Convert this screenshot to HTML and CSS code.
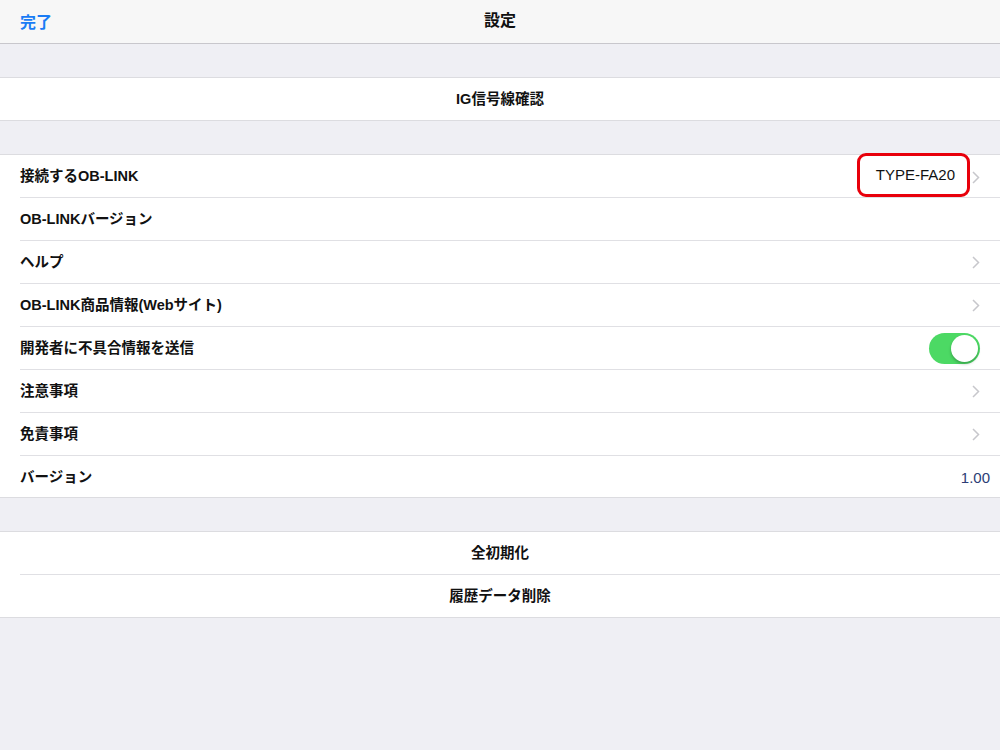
FILE: index.html
```html
<!DOCTYPE html>
<html lang="ja">
<head>
<meta charset="utf-8">
<link rel="stylesheet" href="styles.css">
</head>
<body>
<div class="nav">
  <span class="nav-btn">完了</span>
  <span class="nav-title">設定</span>
</div>
<div class="group">
  <div class="row center"><span class="label">IG信号線確認</span></div>
</div>
<div class="group main">
  <div class="row">
    <span class="label">接続するOB-LINK</span>
    <span class="right">
      <span class="value-box">TYPE-FA20</span>
      <svg class="chev" viewBox="0 0 8 13" width="8" height="13"><path d="M1 1l5.5 5.5L1 12" fill="none" stroke="#c7c7cc" stroke-width="1.5"/></svg>
    </span>
  </div>
  <div class="row"><span class="label">OB-LINKバージョン</span></div>
  <div class="row">
    <span class="label">ヘルプ</span>
    <svg class="chev" viewBox="0 0 8 13" width="8" height="13"><path d="M1 1l5.5 5.5L1 12" fill="none" stroke="#c7c7cc" stroke-width="1.5"/></svg>
  </div>
  <div class="row">
    <span class="label">OB-LINK商品情報(Webサイト)</span>
    <svg class="chev" viewBox="0 0 8 13" width="8" height="13"><path d="M1 1l5.5 5.5L1 12" fill="none" stroke="#c7c7cc" stroke-width="1.5"/></svg>
  </div>
  <div class="row">
    <span class="label">開発者に不具合情報を送信</span>
    <span class="toggle"><span class="knob"></span></span>
  </div>
  <div class="row">
    <span class="label">注意事項</span>
    <svg class="chev" viewBox="0 0 8 13" width="8" height="13"><path d="M1 1l5.5 5.5L1 12" fill="none" stroke="#c7c7cc" stroke-width="1.5"/></svg>
  </div>
  <div class="row">
    <span class="label">免責事項</span>
    <svg class="chev" viewBox="0 0 8 13" width="8" height="13"><path d="M1 1l5.5 5.5L1 12" fill="none" stroke="#c7c7cc" stroke-width="1.5"/></svg>
  </div>
  <div class="row">
    <span class="label">バージョン</span>
    <span class="detail">1.00</span>
  </div>
</div>
<div class="group">
  <div class="row center"><span class="label">全初期化</span></div>
  <div class="row center"><span class="label">履歴データ削除</span></div>
</div>
</body>
</html>
```

FILE: styles.css
```css
html, body {
  margin: 0;
  padding: 0;
}
body {
  width: 1000px;
  height: 750px;
  background: #efeff4;
  font-family: "Liberation Sans", "Noto Sans CJK JP", sans-serif;
  color: #000;
  overflow: hidden;
}
.nav {
  box-sizing: border-box;
  height: 44px;
  background: #f7f7f7;
  border-bottom: 1px solid #c8c7cc;
  display: flex;
  align-items: center;
  justify-content: center;
  position: relative;
  margin-bottom: 33px;
  padding-bottom: 5px;
}
.nav-btn {
  position: absolute;
  left: 20px;
  top: 9px;
  color: #1a7cf5;
  font-size: 16px;
  font-weight: bold;
}
.nav-title {
  font-size: 16px;
  font-weight: bold;
  color: #111;
}
.group {
  background: #fff;
  border-top: 1px solid #dcdce0;
  border-bottom: 1px solid #dcdce0;
  margin-bottom: 33px;
  padding-left: 20px;
}
.row {
  height: 43px;
  box-sizing: border-box;
  display: flex;
  align-items: center;
  justify-content: space-between;
  padding-right: 20px;
  padding-bottom: 3px;
  border-bottom: 1px solid #e0e0e4;
}
.row:last-child {
  border-bottom: none;
  height: 42px;
}
.main .row:last-child {
  height: 41px;
  padding-bottom: 2px;
}
.row.center {
  justify-content: center;
}
.label {
  font-size: 14.5px;
  font-weight: bold;
  color: #111;
}
.right {
  display: flex;
  align-items: center;
  margin-top: 3px;
}
.value-box {
  font-size: 15px;
  color: #111;
  border: 3px solid #e8000b;
  border-radius: 9px;
  height: 44px;
  box-sizing: border-box;
  display: flex;
  align-items: center;
  padding: 0 12px 2px 16px;
  margin-right: 2px;
  margin-top: -2px;
}
.chev {
  display: block;
  margin-top: 3px;
}
.detail {
  font-size: 15px;
  color: #2c3d75;
  margin-right: -10px;
  margin-top: 3px;
}
.toggle {
  width: 51px;
  height: 31px;
  border-radius: 16px;
  background: #4cd964;
  position: relative;
  margin-top: 3px;
}
.knob {
  position: absolute;
  right: 2px;
  top: 2px;
  width: 27px;
  height: 27px;
  border-radius: 50%;
  background: #fff;
  box-shadow: 0 2px 3px rgba(0,0,0,0.25);
}
```
